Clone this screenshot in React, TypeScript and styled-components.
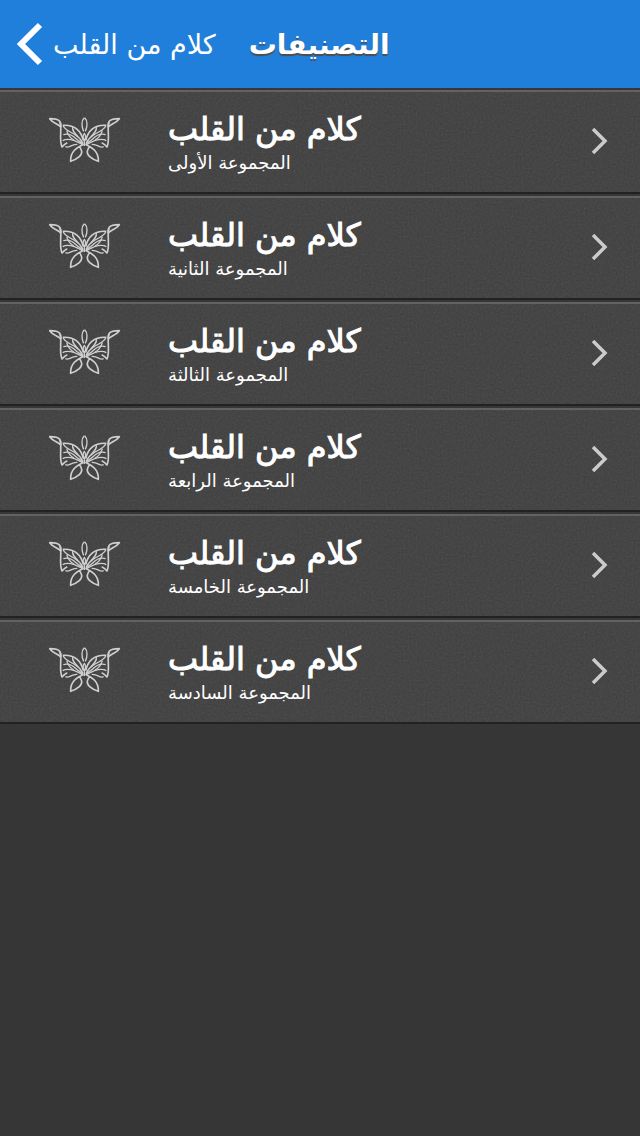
import React from "react";
import styled, { createGlobalStyle } from "styled-components";

const GlobalStyle = createGlobalStyle`
  * { box-sizing: border-box; }
  body {
    margin: 0;
    background: #363636;
    color: #fff;
    font-family: "DejaVu Sans", sans-serif;
  }
`;

const Header = styled.header`
  display: flex;
  align-items: center;
  height: 88px;
  padding: 0 16px;
  background: #217fdc;
`;

const BackButton = styled.button`
  display: flex;
  align-items: center;
  gap: 10px;
  padding: 0;
  border: 0;
  background: none;
  color: #fff;
  font-family: inherit;
  font-size: 27px;
  line-height: 40px;
  white-space: nowrap;
  cursor: pointer;
`;

const BackLabel = styled.span`
  padding-top: 2px;
`;

const PageTitle = styled.h1`
  margin: 0 0 0 33px;
  padding-top: 2px;
  font-size: 28px;
  line-height: 40px;
  font-weight: 700;
  white-space: nowrap;
  text-shadow: 0 2px 1px #4d4d4d;
`;

const List = styled.ul`
  margin: 0;
  padding: 0;
  list-style: none;
`;

const Item = styled.li`
  position: relative;
  border-top: 2px solid #393638;
  background: #3e3e3e;
`;

const Grain = styled.svg`
  position: absolute;
  inset: 0;
  width: 100%;
  height: 100%;
  opacity: 0.12;
  pointer-events: none;
`;

const RowLink = styled.a`
  position: relative;
  display: flex;
  align-items: center;
  height: 104px;
  padding: 0 32px 0 49px;
  border-top: 2px solid #626262;
  border-bottom: 2px solid #222;
  color: inherit;
  text-decoration: none;
`;

const Labels = styled.div`
  flex: 1;
  margin-left: 48px;
  padding-top: 4px;
`;

const RowTitle = styled.h2`
  margin: 0;
  font-size: 32px;
  line-height: 38px;
  font-weight: 400;
  -webkit-text-stroke: 1px #fff;
`;

const RowSubtitle = styled.p`
  margin: 0;
  font-size: 18px;
  line-height: 30px;
`;

const outline = [
  "M29 42C40 42 54 43 59 50C63 56 63 62 62 67C56 60 38 54 29 42Z",
  "M60 52C67 76 56 104 66 127C70 122 74 117 82 114",
  "M68 62C100 60 122 74 130 108",
  "M131 119C118 126 90 136 92 170C110 164 130 152 124 136C122 130 120 128 117 126",
];

const veins = [
  "M70 64C76 78 94 82 108 92C118 98 124 106 129 116",
  "M98 67C96 78 104 86 114 96",
  "M70 90C84 86 96 90 108 102C114 108 122 112 129 118",
  "M80 78C84 92 90 100 102 106",
  "M68 108C82 100 100 104 128 120",
  "M76 126C88 132 92 118 112 119",
];

function Butterfly() {
  const half = (
    <>
      {outline.map((d) => <path key={d} d={d} strokeWidth="5" />)}
      {veins.map((d) => <path key={d} d={d} strokeWidth="4" />)}
    </>
  );
  return (
    <svg width="71" height="51" viewBox="27 37 213 153" fill="none" stroke="#d0d0d0" strokeWidth="4" strokeLinejoin="round" aria-hidden="true">
      <g>{half}</g>
      <g transform="translate(267 0) scale(-1 1)">{half}</g>
      <path d="M133 39C124 47 124 66 131 80M134 39C143 47 143 66 136 80M133 86C127 94 128 100 133 108C138 100 139 94 133 86ZM133 106V124" />
    </svg>
  );
}

const groups = [
  "المجموعة الأولى",
  "المجموعة الثانية",
  "المجموعة الثالثة",
  "المجموعة الرابعة",
  "المجموعة الخامسة",
  "المجموعة السادسة",
];

export default function App() {
  return (
    <>
      <GlobalStyle />
      <Header>
        <BackButton type="button">
          <svg width="27" height="44" viewBox="0 0 27 44" fill="none" stroke="#fff" strokeWidth="6" aria-hidden="true">
            <path d="M24 3L5 22L24 41" />
          </svg>
          <BackLabel dir="rtl">كلام من القلب</BackLabel>
        </BackButton>
        <PageTitle dir="rtl">التصنيفات</PageTitle>
      </Header>
      <main>
        <List>
          {groups.map((group, i) => (
            <Item key={group}>
              <Grain aria-hidden="true">
                <filter id={`grain${i}`}>
                  <feTurbulence type="fractalNoise" baseFrequency="0.5" numOctaves="2" />
                  <feColorMatrix type="saturate" values="0" />
                </filter>
                <rect width="100%" height="100%" filter={`url(#grain${i})`} />
              </Grain>
              <RowLink href="#">
                <Butterfly />
                <Labels>
                  <RowTitle>كلام من القلب</RowTitle>
                  <RowSubtitle>{group}</RowSubtitle>
                </Labels>
                <svg width="17" height="28" viewBox="0 0 17 28" fill="none" stroke="#cbcbcb" strokeWidth="3.500" aria-hidden="true">
                  <path d="M2 1L14 13L2 25" />
                </svg>
              </RowLink>
            </Item>
          ))}
        </List>
      </main>
    </>
  );
}
